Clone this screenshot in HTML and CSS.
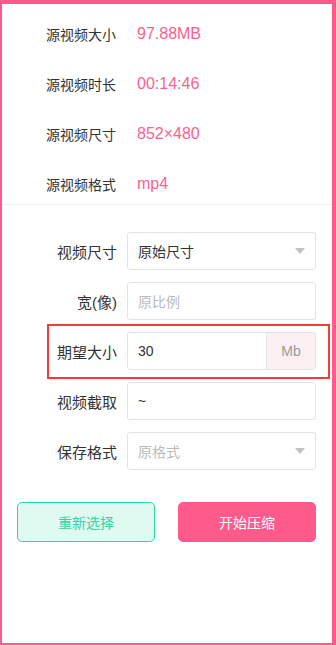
FILE: index.html
```html
<!DOCTYPE html>
<html lang="zh">
<head>
<meta charset="utf-8">
<title>视频压缩</title>
<link rel="stylesheet" href="styles.css">
</head>
<body>
<div class="frame">
  <section class="info">
    <div class="info-row"><span class="info-label">源视频大小</span><span class="info-value">97.88MB</span></div>
    <div class="info-row"><span class="info-label">源视频时长</span><span class="info-value">00:14:46</span></div>
    <div class="info-row"><span class="info-label">源视频尺寸</span><span class="info-value">852×480</span></div>
    <div class="info-row"><span class="info-label">源视频格式</span><span class="info-value">mp4</span></div>
  </section>
  <section class="form">
    <div class="form-row">
      <label class="form-label">视频尺寸</label>
      <div class="field select"><span class="field-text">原始尺寸</span><span class="caret"></span></div>
    </div>
    <div class="form-row">
      <label class="form-label">宽(像)</label>
      <div class="field"><span class="field-text placeholder">原比例</span></div>
    </div>
    <div class="form-row highlight">
      <label class="form-label">期望大小</label>
      <div class="field group"><span class="field-text grow">30</span><span class="addon">Mb</span></div>
      <span class="mark"></span>
    </div>
    <div class="form-row">
      <label class="form-label">视频截取</label>
      <div class="field"><span class="field-text">~</span></div>
    </div>
    <div class="form-row">
      <label class="form-label">保存格式</label>
      <div class="field select"><span class="field-text placeholder">原格式</span><span class="caret"></span></div>
    </div>
  </section>
  <div class="actions">
    <button class="btn btn-reset">重新选择</button>
    <button class="btn btn-start">开始压缩</button>
  </div>
</div>
</body>
</html>
```

FILE: styles.css
```css
* { box-sizing: border-box; }
html, body { margin: 0; padding: 0; background: #fff; }
body {
  font-family: "Liberation Sans", "Noto Sans CJK SC", sans-serif;
  color: #333;
}
.frame {
  width: 336px;
  height: 645px;
  border-style: solid;
  border-color: #ff5a8c;
  border-width: 4px 4px 2px 2px;
  background: #fff;
}
.info {
  padding-top: 10px;
  border-bottom: 1px solid #efefef;
}
.info-row {
  display: flex;
  align-items: center;
  height: 40px;
  padding-left: 44px;
  margin-bottom: 10px;
}
.info-row:last-child { margin-bottom: 0; }
.info-label {
  width: 70px;
  margin-right: 21px;
  font-size: 14px;
  color: #333;
  white-space: nowrap;
}
.info-value {
  font-size: 16px;
  color: #ff5f8f;
}
.form {
  padding: 27px 16px 0 0;
}
.form-row {
  position: relative;
  display: flex;
  align-items: center;
  height: 38px;
  margin-bottom: 12px;
}
.form-row:last-child { margin-bottom: 0; }
.form-label {
  width: 115px;
  margin-right: 10px;
  text-align: right;
  font-size: 15px;
  color: #333;
  white-space: nowrap;
}
.field {
  flex: 1;
  height: 38px;
  border: 1px solid #e3e3e3;
  border-radius: 3px;
  display: flex;
  align-items: center;
  padding-left: 10px;
  font-size: 14px;
  color: #333;
}
.field.group { padding-left: 0; overflow: hidden; }
.field.group .field-text { padding-left: 10px; }
.grow { flex: 1; }
.placeholder { color: #bbb; }
.select { justify-content: space-between; padding-right: 10px; }
.caret {
  width: 0;
  height: 0;
  border-left: 5.5px solid transparent;
  border-right: 5.5px solid transparent;
  border-top: 6px solid #c2c2c2;
}
.addon {
  width: 49px;
  height: 100%;
  display: flex;
  align-items: center;
  justify-content: center;
  background: #fdf0f3;
  border-left: 1px solid #e3e3e3;
  color: #9a9a9a;
  font-size: 14px;
}
.mark {
  position: absolute;
  left: 45px;
  right: -14px;
  top: -8px;
  bottom: -9px;
  border: 2px solid #f53a3a;
  pointer-events: none;
}
.actions {
  display: flex;
  justify-content: space-between;
  padding: 32px 16px 0 15px;
}
.btn {
  width: 138px;
  height: 40px;
  border-radius: 5px;
  font-family: "Liberation Sans", "Noto Sans CJK SC", sans-serif;
  font-size: 14px;
  cursor: pointer;
}
.btn-reset {
  background: #defaf1;
  border: 1px solid #2ad8aa;
  color: #36d3a6;
}
.btn-start {
  background: #ff5a8c;
  border: 1px solid #ff5a8c;
  color: #fff;
}
```
